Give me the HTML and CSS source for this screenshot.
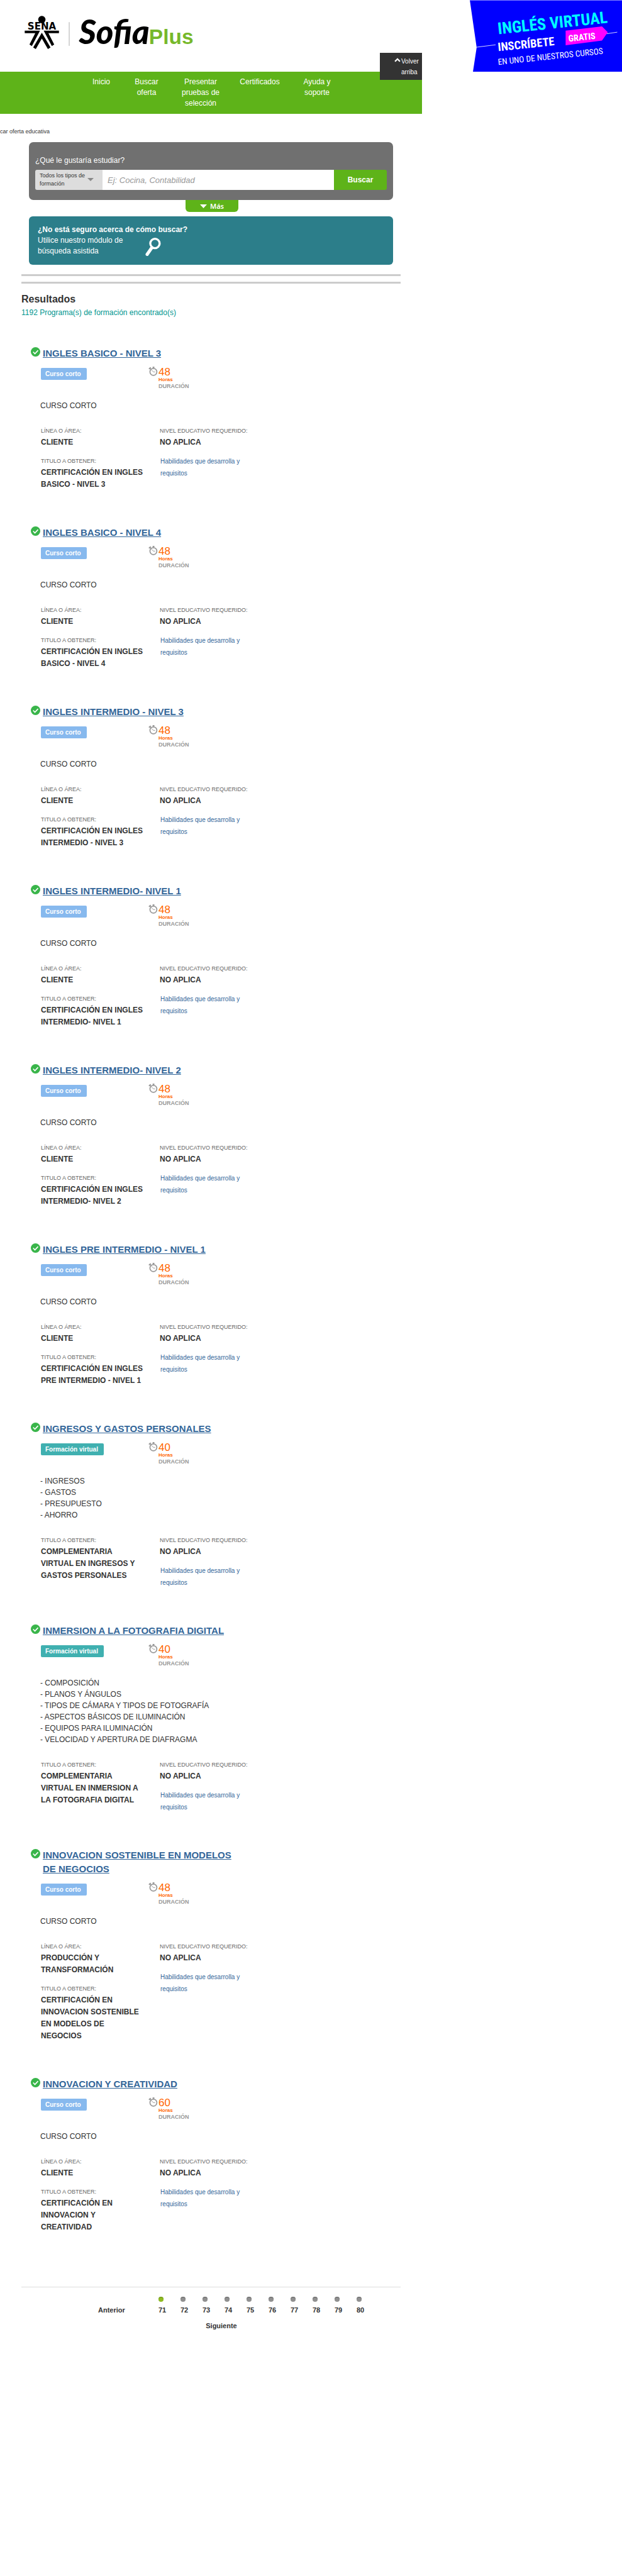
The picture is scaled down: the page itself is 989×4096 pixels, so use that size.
FILE: index.html
```html
<!DOCTYPE html>
<html lang="es">
<head>
<meta charset="utf-8">
<meta name="viewport" content="width=device-width, initial-scale=1">
<title>Sofia Plus - Buscar oferta educativa</title>
<link rel="stylesheet" href="styles.css">
</head>
<body>
<svg class="sprite" aria-hidden="true">
  <symbol id="check" viewBox="0 0 18 18"><circle cx="9" cy="9" r="9" fill="#39b54a"/><path d="M4.5 9l3.3 3.6 6-6.4" fill="none" stroke="#fff" stroke-width="2"/></symbol>
  <symbol id="clock" viewBox="0 0 18 18"><circle cx="9.5" cy="10" r="6.6" fill="none" stroke="#999" stroke-width="2"/><path d="M6 6.500l3.400 3.500h3.200" fill="none" stroke="#999" stroke-width="1.200"/><path d="M1 4.500l3.500-3M8 1.300h3.400" fill="none" stroke="#999" stroke-width="2.400"/><path d="M3 3l2 2.500" stroke="#999" stroke-width="2"/></symbol>
</svg>
<header class="top">
  <a class="logo" href="#" aria-label="SENA Sofia Plus">
    <svg viewBox="0 0 380 136" width="318" height="114">
      <circle cx="79.500" cy="37" r="7"/>
      <text class="sena" x="79.500" y="56" text-anchor="middle">SENA</text>
      <path d="M47 58h29L60.500 87.500 56 84.500 67 63H47zM112 58H83l15.500 29.500 4.500-3L92 63h20zM79.500 62L63 90l5 3 11.500-20L91 93l5-3z"/>
      <path d="M131.500 42v45" stroke="#999"/>
      <text class="sofia" x="150" y="83">Sofia</text>
      <text class="plus" x="283" y="83">Plus</text>
    </svg>
  </a>
  <a class="banner" href="#" aria-label="Inglés virtual">
    <svg viewBox="891 0 289 136" width="242" height="114">
      <path d="M891 0h289v136H897l7-46z" fill="#00f"/>
      <path d="M891 0h289v1H891z" fill="#8080ff"/>
      <path d="M904 89.500l36-4.500M1151 64l20-3" stroke="#fff"/>
      <path d="M1073 58l69-8 11 11-11 16-69 9z" fill="#f0f"/>
      <g transform="rotate(-6 946 65)"><text class="b-title" x="945" y="65">INGLÉS VIRTUAL</text></g>
      <g transform="rotate(-6 946 97)"><text class="b-mid" x="945" y="97">INSCRÍBETE</text></g>
      <g transform="rotate(-6 1080 80)"><text class="b-tag" x="1079" y="79">GRATIS</text></g>
      <g transform="rotate(-6 946 123)"><text class="b-low" x="945" y="123">EN UNO DE NUESTROS CURSOS</text></g>
    </svg>
  </a>
</header>
<div class="page">
  <nav class="menu">
    <a href="#">Inicio</a><a href="#">Buscar oferta</a><a href="#">Presentar pruebas de selección</a><a href="#">Certificados</a><a href="#">Ayuda y soporte</a>
  </nav>
  <a class="to-top" href="#"><svg viewBox="0 0 11 8" width="10" height="7"><path d="M1 6.500L5.500 2 10 6.500" fill="none" stroke="#fff" stroke-width="2.600"/></svg><span>Volver arriba</span></a>
  <div class="crumb">car oferta educativa</div>
  <form class="search">
    <label for="q">¿Qué le gustaría estudiar?</label>
    <div class="search-row">
      <div class="type"><select aria-label="Tipo de formación"><option>Todos los tipos de formación</option></select></div>
      <input id="q" type="text" placeholder="Ej: Cocina, Contabilidad">
      <button type="button">Buscar</button>
    </div>
  </form>
  <button class="more" type="button"><svg viewBox="0 0 13 7" width="11" height="6"><path d="M0 0h13L6.500 7z" fill="#fff"/></svg>Más</button>
  <section class="assist">
    <div class="assist-head">¿No está seguro acerca de cómo buscar?</div>
    <div class="assist-body"><p>Utilice nuestro módulo de búsqueda asistida</p>
      <svg viewBox="0 0 30 35" width="25" height="29"><circle cx="18.500" cy="11" r="9" fill="none" stroke="#fff" stroke-width="4"/><path d="M12.500 19L3.500 32" stroke="#fff" stroke-width="6" stroke-linecap="round"/></svg></div>
  </section>
  <main class="results">
    <div class="bars"></div>
    <h1>Resultados</h1>
    <p class="count">1192 Programa(s) de formación encontrado(s)</p>

    <article class="card">
      <h2><svg class="check"><use href="#check"/></svg><a href="#">INGLES BASICO - NIVEL 3</a></h2>
      <div class="meta"><div><span class="tag">Curso corto</span></div><div class="time"><svg><use href="#clock"/></svg><div><div class="num">48</div><div class="unit">Horas</div><div class="dur">DURACIÓN</div></div></div></div>
      <p class="desc">CURSO CORTO</p>
      <div class="info">
        <dl><dt>LÍNEA O ÁREA:</dt><dd>CLIENTE</dd><dt>TITULO A OBTENER:</dt><dd>CERTIFICACIÓN EN INGLES BASICO - NIVEL 3</dd></dl>
        <div><dl><dt>NIVEL EDUCATIVO REQUERIDO:</dt><dd>NO APLICA</dd></dl><a href="#">Habilidades que desarrolla y requisitos</a></div>
      </div>
    </article>

    <article class="card">
      <h2><svg class="check"><use href="#check"/></svg><a href="#">INGLES BASICO - NIVEL 4</a></h2>
      <div class="meta"><div><span class="tag">Curso corto</span></div><div class="time"><svg><use href="#clock"/></svg><div><div class="num">48</div><div class="unit">Horas</div><div class="dur">DURACIÓN</div></div></div></div>
      <p class="desc">CURSO CORTO</p>
      <div class="info">
        <dl><dt>LÍNEA O ÁREA:</dt><dd>CLIENTE</dd><dt>TITULO A OBTENER:</dt><dd>CERTIFICACIÓN EN INGLES BASICO - NIVEL 4</dd></dl>
        <div><dl><dt>NIVEL EDUCATIVO REQUERIDO:</dt><dd>NO APLICA</dd></dl><a href="#">Habilidades que desarrolla y requisitos</a></div>
      </div>
    </article>

    <article class="card">
      <h2><svg class="check"><use href="#check"/></svg><a href="#">INGLES INTERMEDIO - NIVEL 3</a></h2>
      <div class="meta"><div><span class="tag">Curso corto</span></div><div class="time"><svg><use href="#clock"/></svg><div><div class="num">48</div><div class="unit">Horas</div><div class="dur">DURACIÓN</div></div></div></div>
      <p class="desc">CURSO CORTO</p>
      <div class="info">
        <dl><dt>LÍNEA O ÁREA:</dt><dd>CLIENTE</dd><dt>TITULO A OBTENER:</dt><dd>CERTIFICACIÓN EN INGLES INTERMEDIO - NIVEL 3</dd></dl>
        <div><dl><dt>NIVEL EDUCATIVO REQUERIDO:</dt><dd>NO APLICA</dd></dl><a href="#">Habilidades que desarrolla y requisitos</a></div>
      </div>
    </article>

    <article class="card">
      <h2><svg class="check"><use href="#check"/></svg><a href="#">INGLES INTERMEDIO- NIVEL 1</a></h2>
      <div class="meta"><div><span class="tag">Curso corto</span></div><div class="time"><svg><use href="#clock"/></svg><div><div class="num">48</div><div class="unit">Horas</div><div class="dur">DURACIÓN</div></div></div></div>
      <p class="desc">CURSO CORTO</p>
      <div class="info">
        <dl><dt>LÍNEA O ÁREA:</dt><dd>CLIENTE</dd><dt>TITULO A OBTENER:</dt><dd>CERTIFICACIÓN EN INGLES INTERMEDIO- NIVEL 1</dd></dl>
        <div><dl><dt>NIVEL EDUCATIVO REQUERIDO:</dt><dd>NO APLICA</dd></dl><a href="#">Habilidades que desarrolla y requisitos</a></div>
      </div>
    </article>

    <article class="card">
      <h2><svg class="check"><use href="#check"/></svg><a href="#">INGLES INTERMEDIO- NIVEL 2</a></h2>
      <div class="meta"><div><span class="tag">Curso corto</span></div><div class="time"><svg><use href="#clock"/></svg><div><div class="num">48</div><div class="unit">Horas</div><div class="dur">DURACIÓN</div></div></div></div>
      <p class="desc">CURSO CORTO</p>
      <div class="info">
        <dl><dt>LÍNEA O ÁREA:</dt><dd>CLIENTE</dd><dt>TITULO A OBTENER:</dt><dd>CERTIFICACIÓN EN INGLES INTERMEDIO- NIVEL 2</dd></dl>
        <div><dl><dt>NIVEL EDUCATIVO REQUERIDO:</dt><dd>NO APLICA</dd></dl><a href="#">Habilidades que desarrolla y requisitos</a></div>
      </div>
    </article>

    <article class="card">
      <h2><svg class="check"><use href="#check"/></svg><a href="#">INGLES PRE INTERMEDIO - NIVEL 1</a></h2>
      <div class="meta"><div><span class="tag">Curso corto</span></div><div class="time"><svg><use href="#clock"/></svg><div><div class="num">48</div><div class="unit">Horas</div><div class="dur">DURACIÓN</div></div></div></div>
      <p class="desc">CURSO CORTO</p>
      <div class="info">
        <dl><dt>LÍNEA O ÁREA:</dt><dd>CLIENTE</dd><dt>TITULO A OBTENER:</dt><dd>CERTIFICACIÓN EN INGLES PRE INTERMEDIO - NIVEL 1</dd></dl>
        <div><dl><dt>NIVEL EDUCATIVO REQUERIDO:</dt><dd>NO APLICA</dd></dl><a href="#">Habilidades que desarrolla y requisitos</a></div>
      </div>
    </article>

    <article class="card">
      <h2><svg class="check"><use href="#check"/></svg><a href="#">INGRESOS Y GASTOS PERSONALES</a></h2>
      <div class="meta"><div><span class="tag virtual">Formación virtual</span></div><div class="time"><svg><use href="#clock"/></svg><div><div class="num">40</div><div class="unit">Horas</div><div class="dur">DURACIÓN</div></div></div></div>
      <p class="desc">- INGRESOS<br>- GASTOS<br>- PRESUPUESTO<br>- AHORRO</p>
      <div class="info">
        <dl><dt>TITULO A OBTENER:</dt><dd>COMPLEMENTARIA VIRTUAL EN INGRESOS Y GASTOS PERSONALES</dd></dl>
        <div><dl><dt>NIVEL EDUCATIVO REQUERIDO:</dt><dd>NO APLICA</dd></dl><a href="#">Habilidades que desarrolla y requisitos</a></div>
      </div>
    </article>

    <article class="card">
      <h2><svg class="check"><use href="#check"/></svg><a href="#">INMERSION A LA FOTOGRAFIA DIGITAL</a></h2>
      <div class="meta"><div><span class="tag virtual">Formación virtual</span></div><div class="time"><svg><use href="#clock"/></svg><div><div class="num">40</div><div class="unit">Horas</div><div class="dur">DURACIÓN</div></div></div></div>
      <p class="desc">- COMPOSICIÓN<br>- PLANOS Y ÁNGULOS<br>- TIPOS DE CÁMARA Y TIPOS DE FOTOGRAFÍA<br>- ASPECTOS BÁSICOS DE ILUMINACIÓN<br>- EQUIPOS PARA ILUMINACIÓN<br>- VELOCIDAD Y APERTURA DE DIAFRAGMA</p>
      <div class="info">
        <dl><dt>TITULO A OBTENER:</dt><dd>COMPLEMENTARIA VIRTUAL EN INMERSION A LA FOTOGRAFIA DIGITAL</dd></dl>
        <div><dl><dt>NIVEL EDUCATIVO REQUERIDO:</dt><dd>NO APLICA</dd></dl><a href="#">Habilidades que desarrolla y requisitos</a></div>
      </div>
    </article>

    <article class="card">
      <h2><svg class="check"><use href="#check"/></svg><a href="#">INNOVACION SOSTENIBLE EN MODELOS DE NEGOCIOS</a></h2>
      <div class="meta"><div><span class="tag">Curso corto</span></div><div class="time"><svg><use href="#clock"/></svg><div><div class="num">48</div><div class="unit">Horas</div><div class="dur">DURACIÓN</div></div></div></div>
      <p class="desc">CURSO CORTO</p>
      <div class="info">
        <dl><dt>LÍNEA O ÁREA:</dt><dd>PRODUCCIÓN Y TRANSFORMACIÓN</dd><dt>TITULO A OBTENER:</dt><dd>CERTIFICACIÓN EN INNOVACION SOSTENIBLE EN MODELOS DE NEGOCIOS</dd></dl>
        <div><dl><dt>NIVEL EDUCATIVO REQUERIDO:</dt><dd>NO APLICA</dd></dl><a href="#">Habilidades que desarrolla y requisitos</a></div>
      </div>
    </article>

    <article class="card">
      <h2><svg class="check"><use href="#check"/></svg><a href="#">INNOVACION Y CREATIVIDAD</a></h2>
      <div class="meta"><div><span class="tag">Curso corto</span></div><div class="time"><svg><use href="#clock"/></svg><div><div class="num">60</div><div class="unit">Horas</div><div class="dur">DURACIÓN</div></div></div></div>
      <p class="desc">CURSO CORTO</p>
      <div class="info">
        <dl><dt>LÍNEA O ÁREA:</dt><dd>CLIENTE</dd><dt>TITULO A OBTENER:</dt><dd>CERTIFICACIÓN EN INNOVACION Y CREATIVIDAD</dd></dl>
        <div><dl><dt>NIVEL EDUCATIVO REQUERIDO:</dt><dd>NO APLICA</dd></dl><a href="#">Habilidades que desarrolla y requisitos</a></div>
      </div>
    </article>

    <nav class="pager" aria-label="Páginas">
      <div class="pager-row">
        <a class="prev" href="#">Anterior</a>
        <a class="pg current" href="#">71</a><a class="pg" href="#">72</a><a class="pg" href="#">73</a><a class="pg" href="#">74</a><a class="pg" href="#">75</a><a class="pg" href="#">76</a><a class="pg" href="#">77</a><a class="pg" href="#">78</a><a class="pg" href="#">79</a><a class="pg" href="#">80</a>
      </div>
      <a class="next" href="#">Siguiente</a>
    </nav>
  </main>
</div>
</body>
</html>
```
FILE: styles.css
```css
* { box-sizing: border-box; }
body { margin: 0; background: #fff; color: #333; font: 12px/17px "Liberation Sans", Arial, sans-serif; }
a { color: inherit; text-decoration: none; }
h1, h2, p, dl, dd { margin: 0; }
svg { display: block; flex: none; }
.sprite { position: absolute; width: 0; height: 0; }

.top { display: flex; justify-content: space-between; }
.sena { font: bold 18px "DejaVu Sans", sans-serif; }
.sofia { font: italic 900 63px Lato, "Open Sans", sans-serif; }
.plus { font: bold 40px "Liberation Sans", sans-serif; fill: #76b82a; }
.banner text { fill: #fff; font-family: "Roboto Condensed", "Liberation Sans Narrow", "Roboto", sans-serif; font-weight: bold; }
.banner .b-title { fill: #0ff; font-size: 31px; }
.banner .b-mid { font-size: 22px; }
.banner .b-tag { font-size: 17px; }
.banner .b-low { font-size: 16px; font-weight: normal; }

.page { position: relative; max-width: 671px; }
.menu { display: flex; gap: 26px; padding: 8px 0 8px 140px; background: #5eb319; color: #fff; text-align: center; }
.menu a { flex: 0 1 auto; width: min-content; }
.menu a:nth-child(1) { width: 42px; }
.menu a:nth-child(2) { width: 50px; }
.menu a:nth-child(3) { width: 70px; }
.menu a:nth-child(4) { width: 66px; }
.menu a:nth-child(5) { width: 64px; }
.to-top { position: absolute; right: 0; top: -30px; display: flex; gap: 1px; width: 67px; padding: 5px 6px 4px 23px; background: #333; color: #fff; font-size: 10px; }
.to-top svg { margin-top: 3px; }
.crumb { margin: 22px 0 10px; font-size: 9px; line-height: 13px; }

.search { margin: 0 46px; padding: 21px 10px 16px; border-radius: 7px; background: #707070; color: #fff; }
.search label { display: block; margin-bottom: 6px; }
.search-row { display: flex; height: 32px; border-radius: 3px; overflow: hidden; }
.type { position: relative; width: 107px; background: #ddd; }
.type::after { content: ""; position: absolute; left: 83px; top: 13px; border: 5px solid transparent; border-top-color: #888; border-bottom: 0; }
.type select { appearance: none; width: 100%; height: 32px; padding: 2px 22px 4px 7px; border: 0; background: none; color: #333; font: 9px/13px "Liberation Sans", sans-serif; white-space: pre-wrap; }
.search input { flex: 1; min-width: 0; padding: 0 8px; border: 0; font: italic 13px "Liberation Sans", sans-serif; }
.search input::placeholder { color: #999; }
.search button { width: 84px; border: 0; background: #5eb319; color: #fff; font: bold 12px "Liberation Sans", sans-serif; }
.more { display: flex; align-items: center; justify-content: center; gap: 5px; width: 84px; height: 19px; margin: 0 auto 7px 295px; padding: 0; border: 0; border-radius: 0 0 6px 6px; background: #5eb319; color: #fff; font: 600 11px "Noto Sans", sans-serif; }
.assist { margin: 0 46px 15px; padding: 13px 14px; border-radius: 6px; background: #2c7e8a; color: #fff; }
.assist-head { font-weight: bold; }
.assist-body { display: flex; gap: 21px; height: 34px; }
.assist-body p { width: 150px; }
.assist-body svg { margin-top: 4px; }

.results { margin: 0 34px; }
.bars { height: 15px; border: solid #ccc; border-width: 3px 0; }
h1 { margin-top: 15px; font-size: 16px; line-height: 20px; }
.count { margin: 2px 0 45px; line-height: 18px; color: #00968f; }

.card { margin-bottom: 56px; padding-left: 15px; }
.card h2 { display: flex; gap: 4px; max-width: 340px; font-size: 15px; line-height: 22px; color: #369; }
.card h2 a { text-decoration: underline; }
.check { width: 15px; height: 15px; margin-top: 1px; }
.meta { display: grid; grid-template-columns: 171px 1fr; margin: 10px 0 16px 16px; }
.tag { display: inline-block; margin-top: 2px; padding: 0 9px 0 7px; border-radius: 2px; background: #87b9ee; color: #fff; font: bold 10px/19px "Liberation Sans", sans-serif; }
.virtual { background: #40b0b0; }
.time { display: flex; gap: 1px; }
.time svg { width: 15px; height: 15px; }
.num { font-size: 17px; line-height: 17px; color: #f60; }
.unit { font-size: 8px; line-height: 8px; font-weight: bold; color: #f60; }
.dur { font-size: 9px; line-height: 12px; font-weight: bold; color: #999; }
.desc { margin: 0 0 22px 15px; line-height: 18px; }
.info { display: grid; grid-template-columns: 166px 160px; gap: 23px; margin-left: 16px; }
dt { font-size: 9px; line-height: 18px; color: #666; white-space: nowrap; }
dd { line-height: 19px; font-weight: bold; }
dd + dt { margin-top: 11px; }
.info a { display: block; margin-top: 11px; padding-left: 1px; font-size: 10px; line-height: 19px; color: #369; }

.pager { padding-top: 15px; margin-top: 85px; border-top: 1px solid #ddd; font-size: 11px; font-weight: bold; }
.pager-row { display: flex; align-items: flex-end; padding-left: 122px; }
.prev { width: 96px; }
.pg { width: 35px; }
.pg::before { content: ""; display: block; width: 8px; height: 8px; margin-bottom: 5px; border-radius: 50%; background: #909090; box-shadow: inset 0 1px 1px #666; }
.current::before { background: #8fbc22; box-shadow: inset 0 1px 1px #6b8e1a; }
.next { display: block; margin-top: 8px; padding-left: 33px; text-align: center; }
```
